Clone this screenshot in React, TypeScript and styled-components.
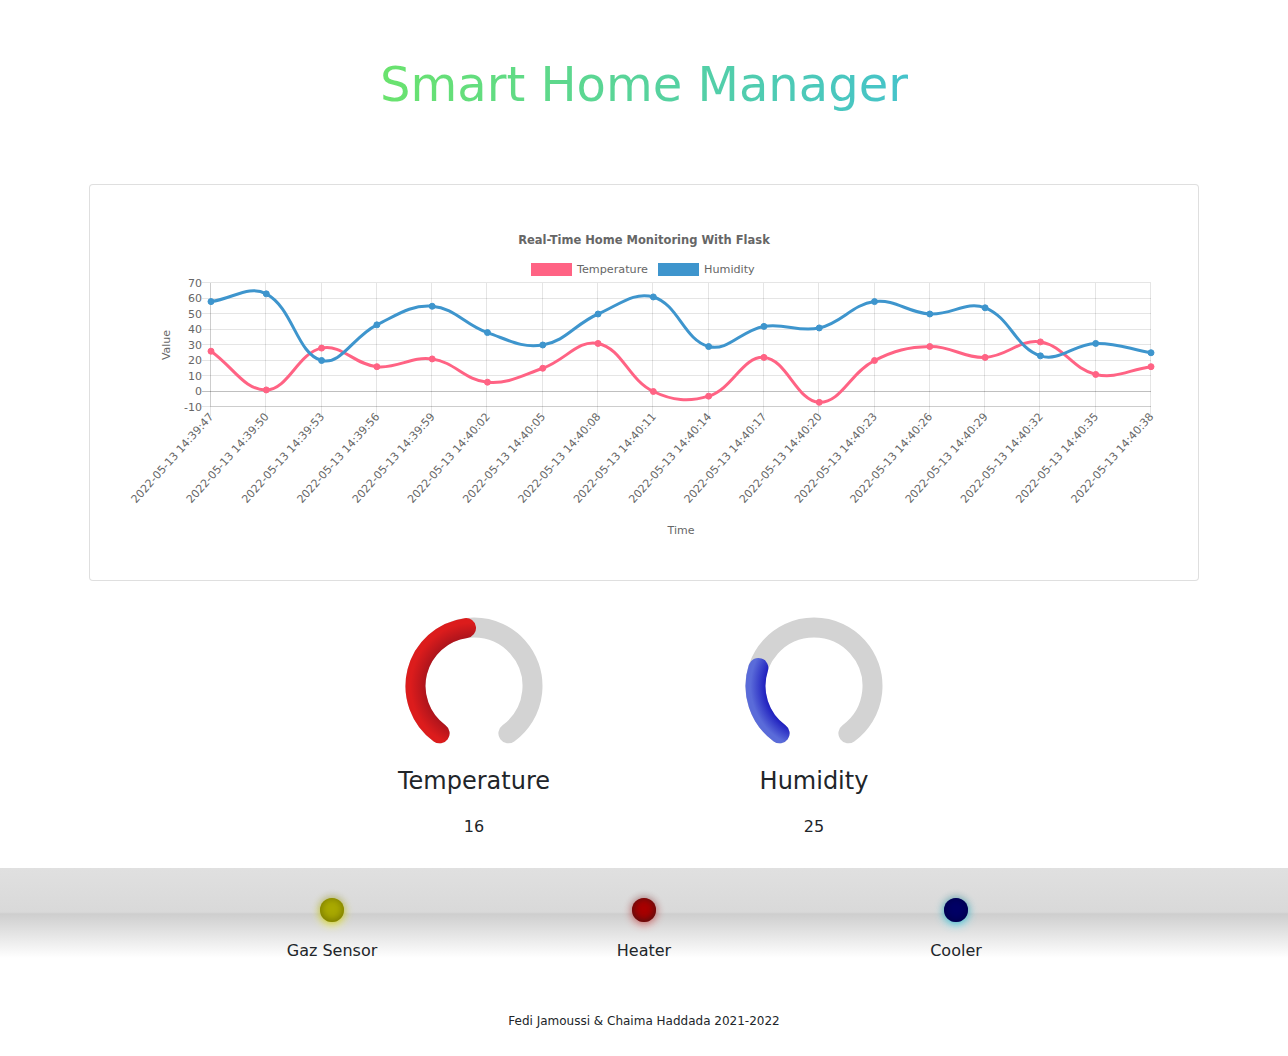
import React from "react";
import styled, { createGlobalStyle } from "styled-components";

const GlobalStyle = createGlobalStyle`
  html, body { margin: 0; padding: 0; background: #ffffff; }
  body {
    font-family: "DejaVu Sans", sans-serif;
    color: #212529;
    font-size: 16px;
    line-height: 1.5;
  }
  * { box-sizing: border-box; }
`;

const Page = styled.div`
  width: 1288px;
  display: flex;
  flex-direction: column;
  align-items: center;
`;

const Title = styled.h1`
  margin: 56px 0 0 0;
  font-size: 48px;
  font-weight: 400;
  line-height: 1.2;
  text-align: center;
`;

const GradientText = styled.span`
  display: inline-block;
  background: linear-gradient(to right, #6ae36d, #45c3cb);
  -webkit-background-clip: text;
  background-clip: text;
  color: transparent;
`;

const ChartCard = styled.div`
  margin-top: 70px;
  width: 1110px;
  height: 397px;
  border: 1px solid rgba(0, 0, 0, 0.125);
  border-radius: 4px;
  background: #fff;
`;

const ChartSvg = styled.svg`
  display: block;
  font-family: "DejaVu Sans", sans-serif;
`;

const GaugeRow = styled.div`
  margin-top: 35px;
  display: grid;
  grid-template-columns: 340px 340px;
`;

const GaugeCol = styled.div`
  display: flex;
  flex-direction: column;
  align-items: center;
`;

const GaugeSvg = styled.svg`
  display: block;
`;

const GaugeLabel = styled.h4`
  margin: 11px 0 0 0;
  font-size: 24px;
  font-weight: 400;
  line-height: 1.2;
  color: #212529;
`;

const GaugeValue = styled.p`
  margin: 20px 0 0 0;
  font-size: 16px;
  line-height: 24px;
  color: #212529;
`;

const Band = styled.div`
  margin-top: 29px;
  width: 1288px;
  height: 90px;
  background: linear-gradient(to bottom, #e0e0e0 0%, #d9d9d9 49%, #cecece 51%, #ffffff 100%);
  display: flex;
  justify-content: center;
  padding-top: 30px;
`;

const LedGrid = styled.div`
  display: grid;
  grid-template-columns: repeat(3, 312px);
  align-items: start;
`;

const LedItem = styled.div`
  display: flex;
  flex-direction: column;
  align-items: center;
`;

const Led = styled.div<{ $color: string; $inset: string; $glow: string }>`
  width: 24px;
  height: 24px;
  border-radius: 50%;
  background-color: ${(p) => p.$color};
  box-shadow: rgba(0, 0, 0, 0.2) 0 -1px 7px 1px, inset ${(p) => p.$inset} 0 -1px 9px,
    ${(p) => p.$glow} 0 2px 10px;
`;

const LedLabel = styled.div`
  margin-top: 17px;
  font-size: 16px;
  line-height: 24px;
  color: #212529;
`;

const Footer = styled.footer`
  margin-top: 54px;
  font-size: 12px;
  line-height: 18px;
  color: #212529;
  text-align: center;
`;

/* ---------------- chart data ---------------- */

const pad = (n: number) => (n < 10 ? `0${n}` : `${n}`);
const labels = Array.from({ length: 18 }, (_, i) => {
  const total = 47 + i * 3;
  const m = 39 + Math.floor(total / 60);
  const s = total % 60;
  return `2022-05-13 14:${pad(m)}:${pad(s)}`;
});

const temperature = [26, 1, 28, 16, 21, 6, 15, 31, 0, -3, 22, -7, 20, 29, 22, 32, 11, 16];
const humidity = [58, 63, 20, 43, 55, 38, 30, 50, 61, 29, 42, 41, 58, 50, 54, 23, 31, 25];

const LEFT = 211;
const RIGHT = 1151;
const TOP = 283;
const BOTTOM = 407;
const xOf = (i: number) => LEFT + (i * (RIGHT - LEFT)) / 17;
const yOf = (v: number) => 391.5 - v * 1.55;

type Pt = { x: number; y: number };

function splinePath(pts: Pt[], t = 0.4): string {
  const clampX = (v: number) => Math.max(LEFT, Math.min(RIGHT, v));
  const clampY = (v: number) => Math.max(TOP, Math.min(BOTTOM, v));
  const cps = pts.map((cur, i) => {
    const prev = pts[i - 1] ?? cur;
    const next = pts[i + 1] ?? cur;
    const d01 = Math.hypot(cur.x - prev.x, cur.y - prev.y);
    const d12 = Math.hypot(next.x - cur.x, next.y - cur.y);
    let s01 = d01 / (d01 + d12);
    let s12 = d12 / (d01 + d12);
    if (isNaN(s01)) s01 = 0;
    if (isNaN(s12)) s12 = 0;
    const fa = t * s01;
    const fb = t * s12;
    return {
      prev: {
        x: clampX(cur.x - fa * (next.x - prev.x)),
        y: clampY(cur.y - fa * (next.y - prev.y)),
      },
      next: {
        x: clampX(cur.x + fb * (next.x - prev.x)),
        y: clampY(cur.y + fb * (next.y - prev.y)),
      },
    };
  });
  let d = `M${pts[0].x.toFixed(2)},${pts[0].y.toFixed(2)}`;
  for (let i = 1; i < pts.length; i++) {
    const a = cps[i - 1].next;
    const b = cps[i].prev;
    d += ` C${a.x.toFixed(2)},${a.y.toFixed(2)} ${b.x.toFixed(2)},${b.y.toFixed(2)} ${pts[i].x.toFixed(2)},${pts[i].y.toFixed(2)}`;
  }
  return d;
}

const TEMP_COLOR = "#ff6384";
const HUM_COLOR = "#3e95cd";

const ticks = [70, 60, 50, 40, 30, 20, 10, 0, -10];

function LineChart() {
  const tempPts = temperature.map((v, i) => ({ x: xOf(i), y: yOf(v) }));
  const humPts = humidity.map((v, i) => ({ x: xOf(i), y: yOf(v) }));
  const crisp = (v: number) => Math.round(v) + 0.5;
  return (
    <ChartSvg width={1108} height={395} viewBox="90 185 1108 395">
      <text x={644} y={243.5} textAnchor="middle" fontSize={11.5} fontWeight={700} fill="#666">
        Real-Time Home Monitoring With Flask
      </text>

      <rect x={531.5} y={263.5} width={40} height={12} fill={TEMP_COLOR} stroke={TEMP_COLOR} />
      <text x={577} y={273} fontSize={11.2} fill="#666">Temperature</text>
      <rect x={658.5} y={263.5} width={40} height={12} fill={HUM_COLOR} stroke={HUM_COLOR} />
      <text x={704} y={273} fontSize={11.2} fill="#666">Humidity</text>

      {labels.map((_, i) => (
        <line
          key={`v${i}`}
          x1={crisp(xOf(i)) - 1}
          x2={crisp(xOf(i)) - 1}
          y1={TOP}
          y2={BOTTOM + 9}
          stroke="rgba(0,0,0,0.1)"
          strokeWidth={1}
        />
      ))}
      {ticks.map((v) => (
        <line
          key={`h${v}`}
          x1={LEFT - 9}
          x2={RIGHT}
          y1={crisp(yOf(v)) - 1}
          y2={crisp(yOf(v)) - 1}
          stroke={v === 0 ? "rgba(0,0,0,0.25)" : "rgba(0,0,0,0.1)"}
          strokeWidth={1}
        />
      ))}
      <line x1={LEFT - 0.5} x2={LEFT - 0.5} y1={TOP} y2={BOTTOM} stroke="rgba(0,0,0,0.1)" />
      <line x1={LEFT} x2={RIGHT} y1={BOTTOM - 0.5} y2={BOTTOM - 0.5} stroke="rgba(0,0,0,0.1)" />

      {ticks.map((v) => (
        <text
          key={`yl${v}`}
          x={202}
          y={yOf(v) + 3.5}
          textAnchor="end"
          fontSize={11}
          fill="#666"
        >
          {v}
        </text>
      ))}

      {labels.map((l, i) => (
        <text
          key={`xl${i}`}
          transform={`translate(${xOf(i) + 1},${415}) rotate(-48)`}
          textAnchor="end"
          dominantBaseline="middle"
          fontSize={11}
          fill="#666"
        >
          {l}
        </text>
      ))}

      <text transform="translate(170,345) rotate(-90)" textAnchor="middle" fontSize={11} fill="#666">
        Value
      </text>
      <text x={681} y={534} textAnchor="middle" fontSize={11} fill="#666">
        Time
      </text>

      <path d={splinePath(tempPts)} fill="none" stroke={TEMP_COLOR} strokeWidth={3} />
      <path d={splinePath(humPts)} fill="none" stroke={HUM_COLOR} strokeWidth={3} />
      {tempPts.map((p, i) => (
        <circle key={`tp${i}`} cx={p.x} cy={p.y} r={3} fill={TEMP_COLOR} stroke={TEMP_COLOR} strokeWidth={1} />
      ))}
      {humPts.map((p, i) => (
        <circle key={`hp${i}`} cx={p.x} cy={p.y} r={3} fill={HUM_COLOR} stroke={HUM_COLOR} strokeWidth={1} />
      ))}
    </ChartSvg>
  );
}

/* ---------------- gauge ---------------- */

const CX = 70;
const CY = 70;
const R = 58.5;
const START = -144;
const SPAN = 288;

function polar(deg: number) {
  const a = (deg * Math.PI) / 180;
  return [CX + R * Math.sin(a), CY - R * Math.cos(a)];
}

function arcPath(from: number, to: number) {
  const [x1, y1] = polar(from);
  const [x2, y2] = polar(to);
  const large = to - from > 180 ? 1 : 0;
  return `M${x1.toFixed(2)},${y1.toFixed(2)} A${R},${R} 0 ${large} 1 ${x2.toFixed(2)},${y2.toFixed(2)}`;
}

type GaugeProps = {
  id: string;
  label: string;
  value: number;
  min: number;
  max: number;
  dark: string;
  light: string;
};

function Gauge({ id, label, value, min, max, dark, light }: GaugeProps) {
  const frac = Math.max(0, Math.min(1, (value - min) / (max - min)));
  const end = START + frac * SPAN;
  return (
    <GaugeCol>
      <GaugeSvg width={140} height={140} viewBox="0 0 140 140">
        <defs>
          <radialGradient id={id} gradientUnits="userSpaceOnUse" cx={CX} cy={CY} r={69}>
            <stop offset="0.7" stopColor={dark} />
            <stop offset="0.92" stopColor={light} />
          </radialGradient>
        </defs>
        <path d={arcPath(START, START + SPAN)} fill="none" stroke="#d3d3d3" strokeWidth={20} strokeLinecap="round" />
        <path d={arcPath(START, end)} fill="none" stroke={`url(#${id})`} strokeWidth={20} strokeLinecap="round" />
      </GaugeSvg>
      <GaugeLabel>{label}</GaugeLabel>
      <GaugeValue>{value}</GaugeValue>
    </GaugeCol>
  );
}

/* ---------------- app ---------------- */

export default function App() {
  return (
    <Page>
      <GlobalStyle />
      <Title>
        <GradientText>Smart Home Manager</GradientText>
      </Title>
      <ChartCard>
        <LineChart />
      </ChartCard>
      <GaugeRow>
        <Gauge id="gTemp" label="Temperature" value={16} min={-10} max={45} dark="#ad141c" light="#dc1c1c" />
        <Gauge id="gHum" label="Humidity" value={25} min={0} max={100} dark="#1e1ebe" light="#5a6bd9" />
      </GaugeRow>
      <Band>
        <LedGrid>
          <LedItem>
            <Led $color="#aaaa00" $inset="#707000" $glow="rgba(255,255,0,0.8)" />
            <LedLabel>Gaz Sensor</LedLabel>
          </LedItem>
          <LedItem>
            <Led $color="#aa0000" $inset="#441313" $glow="rgba(255,0,0,0.45)" />
            <LedLabel>Heater</LedLabel>
          </LedItem>
          <LedItem>
            <Led $color="#000066" $inset="#000044" $glow="rgba(36,224,255,0.8)" />
            <LedLabel>Cooler</LedLabel>
          </LedItem>
        </LedGrid>
      </Band>
      <Footer>Fedi Jamoussi &amp; Chaima Haddada 2021-2022</Footer>
    </Page>
  );
}
